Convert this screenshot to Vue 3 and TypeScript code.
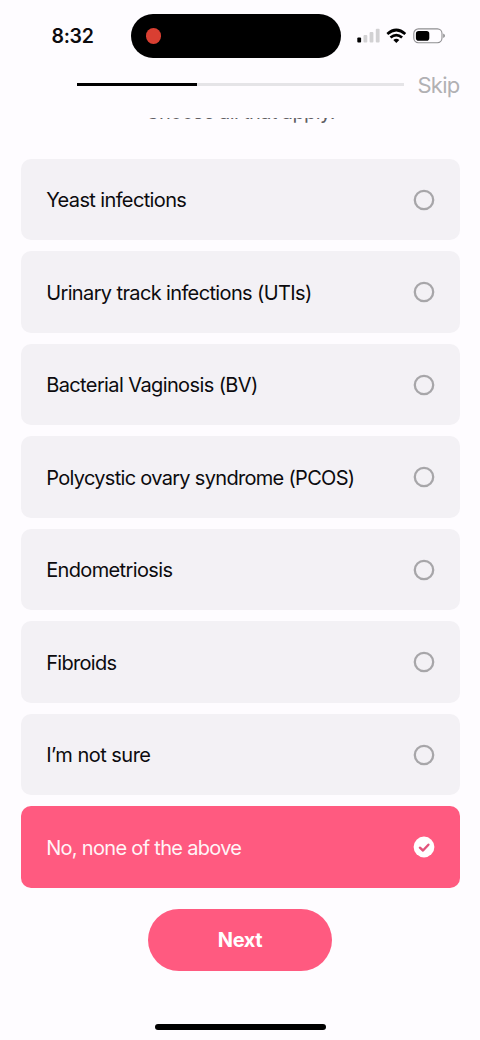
<script setup lang="ts">
import { ref } from 'vue'

interface Option {
  label: string
  spacing: number
}

const options: Option[] = [
  { label: 'Yeast infections', spacing: -0.63 },
  { label: 'Urinary track infections (UTIs)', spacing: -0.63 },
  { label: 'Bacterial Vaginosis (BV)', spacing: -0.61 },
  { label: 'Polycystic ovary syndrome (PCOS)', spacing: -0.69 },
  { label: 'Endometriosis', spacing: -0.64 },
  { label: 'Fibroids', spacing: -0.69 },
  { label: 'I’m not sure', spacing: -0.52 },
  { label: 'No, none of the above', spacing: -0.69 },
]

const selected = ref(7)
</script>

<template>
  <main class="screen">
    <header class="status">
      <span class="time">8:32</span>
      <div class="island"><span class="record"></span></div>
      <svg class="indicators" width="90" height="18" viewBox="0 0 90 18">
        <rect x="0.3" y="10.6" width="3.8" height="5" rx="1" fill="#000" />
        <g fill="#d2d1d3">
          <rect x="6.5" y="8" width="3.8" height="7.6" rx="1" />
          <rect x="12.6" y="5" width="3.8" height="10.6" rx="1" />
          <rect x="18.8" y="1.8" width="3.8" height="13.8" rx="1" />
        </g>
        <g fill="none" stroke="#000" stroke-width="2.7">
          <path d="M30.3 6.9 Q39.3 -0.9 48.3 6.9" />
          <path d="M33.5 10.6 Q39.3 5.6 45.1 10.6" />
        </g>
        <path d="M36.3 12.9 Q39.3 10.6 42.3 12.9 L39.3 15.9 Z" fill="#000" />
        <rect x="56.8" y="1.9" width="28.2" height="13.8" rx="4.6" fill="none" stroke="#8f8e91" stroke-width="1.1" />
        <rect x="58.9" y="3.9" width="13.4" height="9.8" rx="2.8" fill="#000" />
        <path d="M86.2 6.6 Q88 7.3 88 8.8 Q88 10.3 86.2 11 Z" fill="#8f8e91" />
      </svg>
    </header>

    <nav class="progress-row">
      <div class="track"><div class="fill"></div></div>
      <button class="skip" type="button">Skip</button>
    </nav>

    <section class="content">
      <p class="hint"><span>Choose all that apply.</span></p>
      <div class="options">
        <button
          v-for="(option, i) in options"
          :key="option.label"
          type="button"
          class="option"
          :class="{ active: selected === i }"
          @click="selected = i"
        >
          <span class="label" :style="{ letterSpacing: option.spacing + 'px' }">{{ option.label }}</span>
          <svg class="mark" width="22" height="22" viewBox="0 0 22 22">
            <template v-if="selected === i">
              <circle cx="11" cy="11" r="10.4" fill="#fff" />
              <path d="M6.9 11.7 L10 14.5 L15.4 8.7" fill="none" stroke="#e2547c" stroke-width="2.4" stroke-linecap="round" stroke-linejoin="round" />
            </template>
            <circle v-else cx="11" cy="11" r="9.2" fill="none" stroke="#a7a6a9" stroke-width="2.3" />
          </svg>
        </button>
      </div>
    </section>

    <footer class="footer">
      <button class="next" type="button">Next</button>
      <div class="home"></div>
    </footer>
  </main>
</template>

<style>
body {
  margin: 0;
  background: #fefcff;
}
</style>

<style scoped>
.screen {
  box-sizing: border-box;
  width: 480px;
  height: 1040px;
  display: flex;
  flex-direction: column;
  overflow: hidden;
  background: #fefcff;
  color: #0c0b0e;
  font-family: Inter, "Liberation Sans", sans-serif;
}

button {
  border: 0;
  padding: 0;
  margin: 0;
  font: inherit;
  color: inherit;
  background: none;
}

.status {
  height: 72px;
  flex: none;
  display: grid;
  grid-template-columns: 131.3px 209.7px 1fr;
  align-items: center;
}

.time {
  padding-left: 51.5px;
  font-size: 19.5px;
  font-weight: 600;
  letter-spacing: -0.3px;
}

.island {
  height: 44.5px;
  border-radius: 23px;
  background: #000;
  display: flex;
  align-items: center;
}

.record {
  flex: none;
  width: 15.4px;
  height: 15.4px;
  margin-left: 14.5px;
  border-radius: 50%;
  background: #d93f32;
}

.indicators {
  margin-left: 16px;
}

.progress-row {
  height: 45.7px;
  flex: none;
  display: flex;
  align-items: center;
  box-sizing: border-box;
  padding: 0 20.5px 20.4px 77px;
}

.track {
  width: 326.5px;
  height: 2.4px;
  background: #e5e4e7;
}

.fill {
  width: 120px;
  height: 100%;
  background: #000;
}

.skip {
  margin-left: auto;
  font-size: 22px;
  line-height: 26px;
  letter-spacing: -0.75px;
  color: #b1b0b3;
}

.content {
  flex: none;
  height: 770.3px;
  overflow: hidden;
  display: flex;
  flex-direction: column;
  justify-content: flex-end;
}

.hint {
  margin: 0 0 34px;
  text-align: center;
  font-size: 20px;
  line-height: 26px;
  letter-spacing: -0.62px;
  color: #5f5e62;
}

.options {
  display: flex;
  flex-direction: column;
  gap: 11px;
  padding: 0 20.5px;
}

.option {
  height: 81.5px;
  box-sizing: border-box;
  padding: 0 25px 0 25.7px;
  border-radius: 10px;
  background: #f3f1f5;
  display: flex;
  align-items: center;
  justify-content: space-between;
  font-size: 20px;
  white-space: nowrap;
}

.label {
  padding-top: 1.3px;
}

.option.active {
  background: #ff5a80;
  color: #fff4f7;
}

.mark {
  flex: none;
}

.footer {
  flex: 1;
  display: flex;
  flex-direction: column;
  align-items: center;
  justify-content: space-between;
  padding: 21px 0 10px;
}

.next {
  width: 184.5px;
  height: 62px;
  border-radius: 31px;
  background: #ff5a80;
  color: #fff;
  font-size: 20px;
  font-weight: 700;
  letter-spacing: -0.4px;
}

.home {
  width: 171px;
  height: 6px;
  border-radius: 3px;
  background: #000;
}
</style>
